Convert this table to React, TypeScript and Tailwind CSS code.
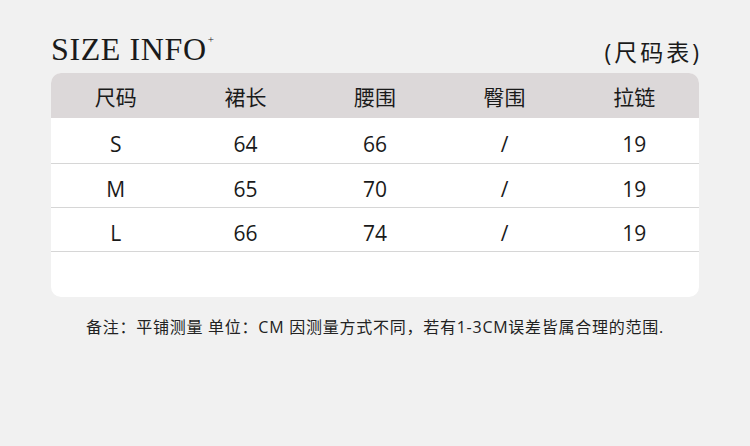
import React from 'react';

const headers = ['尺码', '裙长', '腰围', '臀围', '拉链'];
const rows = [
  ['S', '64', '66', '/', '19'],
  ['M', '65', '70', '/', '19'],
  ['L', '66', '74', '/', '19'],
];

const sans = "font-['Open_Sans','Noto_Sans_CJK_SC',sans-serif]";

const App: React.FC = () => {
  return (
    <div className={`w-[750px] h-[446px] bg-[#f1f1f1] px-[51px] pt-[30px] ${sans}`}>
      {/* Title */}
      <div className="flex items-end justify-between h-[35px]">
        <div className="font-['Liberation_Serif',serif] text-[32px] leading-none text-[#1a1a1a] tracking-[0.6px]">
          SIZE INFO<sup className="text-[11px] text-[#1a1a1a] align-top relative top-[6px] ml-[1px]">+</sup>
        </div>
        <div className="text-[23px] leading-none text-[#1a1a1a] tracking-[3px] mr-[-3px] mb-[1px]">(尺码表)</div>
      </div>

      {/* Table */}
      <div className="mt-[8px] bg-white rounded-[10px] overflow-hidden">
        <div className="grid grid-cols-5 h-[45px] pt-[5px] bg-[#dcd8d9] items-center text-[21px] text-[#1a1a1a]">
          {headers.map(h => (
            <div key={h} className="text-center">{h}</div>
          ))}
        </div>
        {rows.map((r, k) => (
          <div key={r[0]} className={`grid grid-cols-5 ${k === 0 ? 'h-[46px]' : 'h-[44px]'} pt-[9px] border-b border-[#d6d6d6] items-center text-[21px] text-[#1a1a1a]`}>
            {r.map((c, i) => (
              <div key={i} className="text-center">{c}</div>
            ))}
          </div>
        ))}
        <div className="h-[45px]" />
      </div>

      {/* Footer note */}
      <p className="mt-[18px] text-center text-[16px] text-[#222] tracking-[0.75px]">
        备注：平铺测量 单位：CM 因测量方式不同，若有1-3CM误差皆属合理的范围.
      </p>
    </div>
  );
};

export default App;
